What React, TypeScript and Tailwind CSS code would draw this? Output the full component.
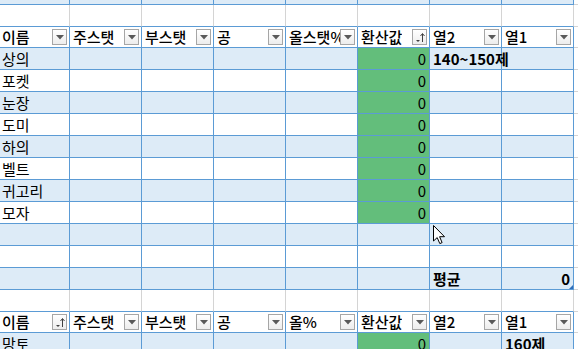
import clsx from 'clsx';
import type { ReactNode } from 'react';

const WIDTHS = ['w-[70px]', 'w-[72px]', 'w-[72px]', 'w-[72px]', 'w-[72px]', 'w-[72px]', 'w-[72px]', 'w-[72px]'];

type Fill = 'light' | 'white' | 'green';

function Cell({
  i,
  fill,
  grayV = false,
  align = 'left',
  children,
  className,
}: {
  i: number;
  fill: Fill;
  grayV?: boolean;
  align?: 'left' | 'right';
  children?: ReactNode;
  className?: string;
}) {
  return (
    <div
      className={clsx(
        'relative flex shrink-0 items-center border-r border-b border-b-[#5B9BD5]',
        WIDTHS[i],
        fill === 'light' && 'bg-[#DDEBF7]',
        fill === 'white' && 'bg-white',
        fill === 'green' && 'bg-[#63BE7B]',
        grayV ? 'border-r-[#D4D4D4]' : 'border-r-[#5B9BD5]',
        align === 'right' ? 'justify-end pr-[3px]' : i === 0 ? 'pl-[2px]' : 'pl-[3px]',
        className,
      )}
    >
      {children}
    </div>
  );
}

function Strip() {
  return <div className="min-w-0 flex-1 border-b border-[#D4D4D4] bg-white" />;
}

function FilterButton({ sorted = false }: { sorted?: boolean }) {
  return (
    <div className="ml-auto mr-[2px] flex h-[16px] w-[15px] shrink-0 items-center justify-center border border-[#A6A6A6] bg-gradient-to-b from-white to-[#EDEDED]">
      {sorted ? (
        <svg width="11" height="11" viewBox="0 0 11 11">
          <path d="M2 8 h4 L4 10 Z" fill="#404040" />
          <path d="M8.5 10 V2" stroke="#404040" strokeWidth="1" />
          <path d="M6.5 4 L8.5 1.5 L10.5 4" stroke="#404040" strokeWidth="1" fill="none" />
        </svg>
      ) : (
        <svg width="8" height="5" viewBox="0 0 8 5">
          <path d="M0 0 H8 L4 4.5 Z" fill="#595959" />
        </svg>
      )}
    </div>
  );
}

function HeaderRow({ labels, sortedAt }: { labels: string[]; sortedAt: number }) {
  return (
    <div className="flex h-[21px]">
      {labels.map((l, i) => (
        <Cell key={i} i={i} fill="white" className="pr-0">
          <span className="min-w-0 overflow-hidden whitespace-nowrap font-medium leading-[20px]">{l}</span>
          <FilterButton sorted={i === sortedAt} />
        </Cell>
      ))}
      <Strip />
    </div>
  );
}

function BlankRow() {
  return (
    <div className="flex h-[22px]">
      {WIDTHS.map((_, i) => (
        <Cell key={i} i={i} fill="white" grayV />
      ))}
      <Strip />
    </div>
  );
}

function DataRow({
  fill,
  name,
  green,
  col2,
  col1,
}: {
  fill: Fill;
  name?: string;
  green?: boolean;
  col2?: string;
  col1?: string;
}) {
  return (
    <div className="flex h-[22px]">
      <Cell i={0} fill={fill}>
        {name}
      </Cell>
      {[1, 2, 3, 4].map((i) => (
        <Cell key={i} i={i} fill={fill} />
      ))}
      <Cell i={5} fill={green ? 'green' : fill} align="right">
        {green ? '0' : null}
      </Cell>
      <Cell i={6} fill={fill}>
        {col2 && <span className="relative z-10 whitespace-nowrap font-bold">{col2}</span>}
      </Cell>
      <Cell i={7} fill={fill}>
        {col1 && <span className="whitespace-nowrap font-bold">{col1}</span>}
      </Cell>
      <Strip />
    </div>
  );
}

const HEAD1 = ['이름', '주스탯', '부스탯', '공', '올스탯%', '환산값', '열2', '열1'];
const HEAD2 = ['이름', '주스탯', '부스탯', '공', '올%', '환산값', '열2', '열1'];
const ITEMS = ['상의', '포켓', '눈장', '도미', '하의', '벨트', '귀고리', '모자'];

export default function App() {
  return (
    <div className="relative h-[349px] w-[578px] overflow-hidden bg-white font-['Noto_Sans_CJK_KR','Noto_Sans',sans-serif] text-[15px] leading-none text-black">
      {/* tail of the table above */}
      <div className="flex h-[5px]">
        {WIDTHS.map((_, i) => (
          <Cell key={i} i={i} fill="light" />
        ))}
        <Strip />
      </div>
      <BlankRow />

      <HeaderRow labels={HEAD1} sortedAt={5} />
      {ITEMS.map((n, idx) => (
        <DataRow
          key={n}
          fill={idx % 2 === 0 ? 'light' : 'white'}
          name={n}
          green
          col2={idx === 0 ? '140~150제' : undefined}
        />
      ))}
      <DataRow fill="light" />
      <DataRow fill="white" />

      {/* total row */}
      <div className="flex h-[22px]">
        {[0, 1, 2, 3, 4, 5].map((i) => (
          <Cell key={i} i={i} fill="light" />
        ))}
        <Cell i={6} fill="light">
          <span className="font-bold">평균</span>
        </Cell>
        <Cell i={7} fill="light" align="right">
          <span className="font-bold">0</span>
          <span className="absolute right-0 bottom-0 h-0 w-0 border-b-[4px] border-l-[4px] border-b-[#2F6EBA] border-l-transparent" />
        </Cell>
        <Strip />
      </div>

      <BlankRow />
      <HeaderRow labels={HEAD2} sortedAt={0} />
      <DataRow fill="light" name="망토" green col1="160제" />

      {/* mouse pointer */}
      <svg className="absolute left-[433px] top-[225px]" width="13" height="20" viewBox="0 0 13 20">
        <path
          d="M0.5 0.5 L0.5 16 L4.2 12.6 L6.8 18.6 L9.1 17.6 L6.6 11.7 L11.5 11.7 Z"
          fill="white"
          stroke="black"
          strokeWidth="1"
          strokeLinejoin="round"
        />
      </svg>
    </div>
  );
}
